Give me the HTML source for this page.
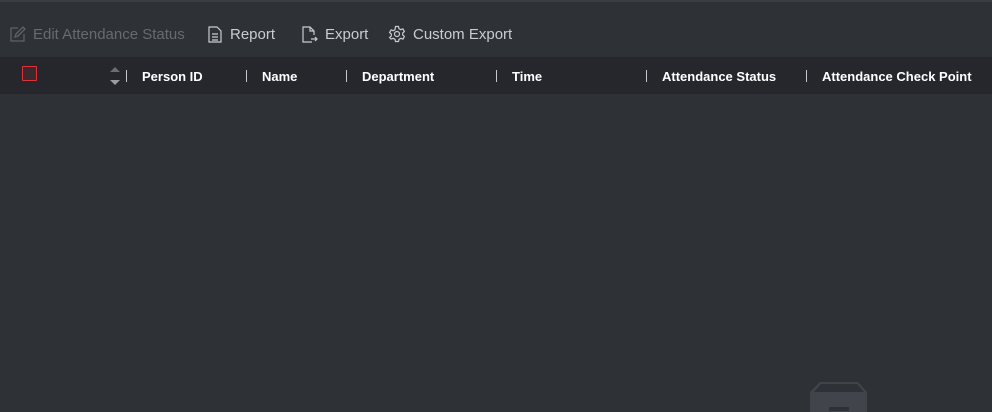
<!DOCTYPE html>
<html><head><meta charset="utf-8"><style>
*{margin:0;padding:0;box-sizing:border-box}
body{width:992px;height:412px;background:#2e3136;font-family:"Liberation Sans",sans-serif;position:relative;overflow:hidden}
.topline{position:absolute;left:0;top:0;width:992px;height:2px;background:#3a3d42}
.tb{position:absolute;top:24px;height:20px;font-size:15px;color:#c9ccd1;display:flex;align-items:center;white-space:nowrap}
.tb svg{margin-right:7px}
.hdr{position:absolute;left:0;top:57px;width:992px;height:37px;background:#25272c}
.h{position:absolute;top:12px;font-size:13px;font-weight:bold;color:#fff}
.sep{position:absolute;top:13px;width:1px;height:12px;background:#c8c8c8}
.cb{position:absolute;left:22px;top:9px;width:15px;height:15px;border:1px solid #e0313a;background:#3a2a2e;border-radius:1px}
</style></head><body>
<div class="topline"></div>
<div class="tb" style="left:9px;color:#676a70">
<svg width="17" height="17" viewBox="0 0 17 17" fill="none" stroke="#5f6268" stroke-width="1.3"><path d="M9 2H2v13h13V8"/><path d="M6 11l1-3 7-7 2 2-7 7z"/></svg>Edit Attendance Status</div>
<div class="tb" style="left:207px">
<svg width="16" height="17" viewBox="0 0 16 17" fill="none" stroke="#c9ccd1" stroke-width="1.2"><path d="M2 1h8l4 4v11H2z"/><path d="M5 8h6M5 11h6M5 14h6"/></svg>Report</div>
<div class="tb" style="left:301px">
<svg width="17" height="17" viewBox="0 0 17 17" fill="none" stroke="#c9ccd1" stroke-width="1.2"><path d="M11 16H2V1h7l4 4v4"/><path d="M9 1v4h4M10 13h6M14 11l2 2-2 2"/></svg>Export</div>
<div class="tb" style="left:388px">
<svg width="18" height="18" viewBox="0 0 18 18" fill="none" stroke="#c9ccd1" stroke-width="1.2"><circle cx="9" cy="9" r="2.5"/><path d="M7.5 1.5h3l.5 2.2 1.8 1 2.1-.8 1.5 2.6-1.7 1.5v2l1.7 1.5-1.5 2.6-2.1-.8-1.8 1-.5 2.2h-3l-.5-2.2-1.8-1-2.1.8L1.6 12.5 3.3 11V9L1.6 7.5 3.1 4.9l2.1.8 1.8-1z"/></svg>Custom Export</div>
<div class="hdr">
<div class="cb"></div>
<svg style="position:absolute;left:109px;top:8px" width="12" height="22"><path d="M1 7l5-5 5 5z" fill="#6a6d72"/><path d="M1 15l5 5 5-5z" fill="#9a9da2"/></svg>
<div class="sep" style="left:126px"></div><div class="h" style="left:142px">Person ID</div>
<div class="sep" style="left:246px"></div><div class="h" style="left:262px">Name</div>
<div class="sep" style="left:346px"></div><div class="h" style="left:362px">Department</div>
<div class="sep" style="left:496px"></div><div class="h" style="left:512px">Time</div>
<div class="sep" style="left:646px"></div><div class="h" style="left:662px">Attendance Status</div>
<div class="sep" style="left:806px"></div><div class="h" style="left:822px">Attendance Check Point</div>
</div>
<svg style="position:absolute;left:808px;top:380px" width="62" height="32"><path d="M12 2h38l9 10v20H2V12z" fill="#41454b"/><path d="M13 4h36l7 8H6z" fill="#2e3136"/><rect x="21" y="27" width="20" height="4" fill="#2e3136"/></svg>
</body></html>
